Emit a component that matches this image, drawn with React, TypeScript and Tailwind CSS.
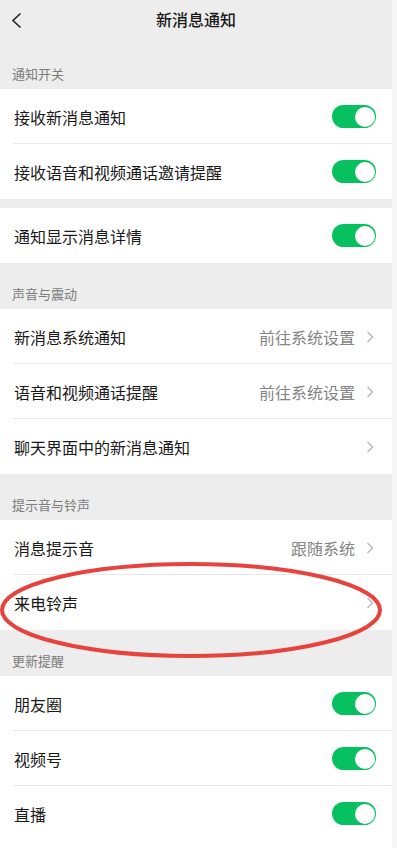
import React from 'react'

type Row = { label: string; toggle?: boolean; value?: string; arrow?: boolean }

const font = { fontFamily: '"Noto Sans CJK SC", "Noto Sans", sans-serif' }

function Toggle() {
  return (
    <div className="w-[44px] h-[23px] rounded-full bg-[#07c160] p-[1.5px] flex justify-end">
      <div className="w-[20px] h-[20px] rounded-full bg-white" />
    </div>
  )
}

function Chevron() {
  return (
    <svg width="8" height="12" viewBox="0 0 8 12" className="ml-[11px]">
      <path d="M1.5 1 L6.5 6 L1.5 11" fill="none" stroke="#b3b3b3" strokeWidth="1.3" />
    </svg>
  )
}

function SectionLabel({ text }: { text: string }) {
  return (
    <div className="h-[46px] flex items-end pb-[6px] pl-[12px] text-[13px] leading-[18px] text-[#7c7c7c]">
      {text}
    </div>
  )
}

function Group({ rows, grow }: { rows: Row[]; grow?: boolean }) {
  return (
    <div className={grow ? 'bg-white flex-1' : 'bg-white'}>
      {rows.map((r, i) => (
        <div key={r.label} className="h-[55px] relative flex items-center pl-[14px] pr-[16px]">
          <span className="flex-1 text-[16px] leading-[22px] text-[#191919]">{r.label}</span>
          {r.toggle && <Toggle />}
          {r.value && <span className="text-[16px] leading-[22px] text-[#838383]">{r.value}</span>}
          {r.arrow && <div className="mr-[2px]"><Chevron /></div>}
          {i < rows.length - 1 && (
            <div className="absolute left-[13px] right-0 bottom-0 h-px bg-[#e8e8e8]" />
          )}
        </div>
      ))}
    </div>
  )
}

export default function App() {
  return (
    <div className="w-[397px] h-[848px] flex overflow-hidden" style={font}>
      <div className="w-[392px] relative flex flex-col bg-[#ededed]">
        {/* header */}
        <div className="h-[43px] relative flex justify-center">
          <svg width="12" height="18" viewBox="0 0 12 18" className="absolute left-[11px] top-[12px]">
            <path d="M9.5 1.5 L2 8.5 L9.5 15.5" fill="none" stroke="#222" strokeWidth="1.6" />
          </svg>
          <span className="mt-[7px] text-[16px] leading-[24px] text-[#191919] font-medium">新消息通知</span>
        </div>

        <SectionLabel text="通知开关" />
        <Group rows={[
          { label: '接收新消息通知', toggle: true },
          { label: '接收语音和视频通话邀请提醒', toggle: true },
        ]} />
        <div className="h-[9px]" />
        <Group rows={[{ label: '通知显示消息详情', toggle: true }]} />

        <SectionLabel text="声音与震动" />
        <Group rows={[
          { label: '新消息系统通知', value: '前往系统设置', arrow: true },
          { label: '语音和视频通话提醒', value: '前往系统设置', arrow: true },
          { label: '聊天界面中的新消息通知', arrow: true },
        ]} />

        <SectionLabel text="提示音与铃声" />
        <Group rows={[
          { label: '消息提示音', value: '跟随系统', arrow: true },
          { label: '来电铃声', arrow: true },
        ]} />

        <SectionLabel text="更新提醒" />
        <Group grow rows={[
          { label: '朋友圈', toggle: true },
          { label: '视频号', toggle: true },
          { label: '直播', toggle: true },
        ]} />

        {/* red annotation ellipse */}
        <svg width="392" height="110" viewBox="0 0 392 110" className="absolute left-0 top-[555px] pointer-events-none">
          <ellipse cx="191" cy="55" rx="189" ry="46" fill="none" stroke="#e8423c" strokeWidth="4" />
        </svg>
      </div>
      <div className="flex-1 bg-[#f6f6f6]" />
    </div>
  )
}
